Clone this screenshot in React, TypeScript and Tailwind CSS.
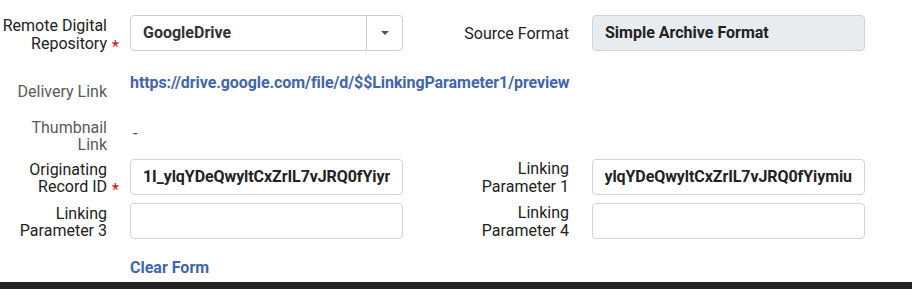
const RECORD_ID = "1I_ylqYDeQwyltCxZrIL7vJRQ0fYiymiu";

function Label({ children, required, muted }: { children: React.ReactNode; required?: boolean; muted?: boolean }) {
  return (
    <div className="relative w-[107px] shrink-0 pt-[2px] text-right leading-[17.6px]">
      <span className={muted ? "text-[#5a5a5a]" : "text-[#222]"}>{children}</span>
      {required && <span className="absolute right-[-12px] bottom-[-3px] text-[#e00]">*</span>}
    </div>
  );
}

function RightLabel({ children }: { children: React.ReactNode }) {
  return (
    <div className="flex h-[38px] w-[166px] shrink-0 items-center justify-end">
      <div className="w-[107px] text-right leading-[17.6px] text-[#222]">{children}</div>
    </div>
  );
}

function TextBox({ value, alignEnd }: { value?: string; alignEnd?: boolean }) {
  return (
    <div className="ml-[23px] flex h-[36px] w-[273px] shrink-0 items-center rounded border border-[#d4d4d4] bg-white px-3">
      <div className={"flex w-full overflow-hidden whitespace-nowrap font-bold tracking-[-0.08px] text-[#222] " + (alignEnd ? "justify-end" : "")}>
        {value}
      </div>
    </div>
  );
}

export default function App() {
  return (
    <div className="relative h-[289px] w-[912px] overflow-hidden bg-white text-[16px]" style={{ fontFamily: "Roboto, 'Liberation Sans', sans-serif" }}>
      <div className="flex flex-col pt-[15px]">
        {/* repository + source format */}
        <div className="flex h-[36px] items-start">
          <Label required>Remote Digital Repository</Label>
          <div className="ml-[23px] flex h-[36px] w-[273px] shrink-0 items-stretch rounded border border-[#cfcfcf] bg-white">
            <div className="flex flex-1 items-center px-3 font-bold text-[#333]">GoogleDrive</div>
            <div className="flex w-[36px] items-center justify-center border-l border-[#cfcfcf]">
              <span className="h-0 w-0 border-x-[4px] border-t-[4px] border-x-transparent border-t-[#555]" />
            </div>
          </div>
          <RightLabel>Source Format</RightLabel>
          <div className="ml-[23px] flex h-[36px] w-[273px] shrink-0 items-center rounded border border-[#cfd4da] bg-[#e9ecef] px-3 font-bold text-[#222]">
            Simple Archive Format
          </div>
        </div>

        {/* delivery link */}
        <div className="mt-[23px] flex items-start">
          <div className="pt-[7px]">
            <Label muted>Delivery Link</Label>
          </div>
          <a className="ml-[23px] font-bold leading-[18px] tracking-[-0.08px] text-[#3f66ae]">https://drive.google.com/file/d/$$LinkingParameter1/preview</a>
        </div>

        {/* thumbnail */}
        <div className="mt-[16px] flex h-[36px] items-start">
          <Label muted>Thumbnail Link</Label>
          <span className="ml-[26px] mt-[8px] leading-[18px] text-[#444]">-</span>
        </div>

        {/* ids */}
        <div className="mt-[6px] flex h-[36px] items-start">
          <Label required>Originating Record ID</Label>
          <TextBox value={RECORD_ID} />
          <RightLabel>Linking Parameter 1</RightLabel>
          <TextBox value={RECORD_ID} alignEnd />
        </div>

        <div className="mt-[8px] flex h-[36px] items-start">
          <Label>Linking Parameter 3</Label>
          <TextBox />
          <RightLabel>Linking Parameter 4</RightLabel>
          <TextBox />
        </div>

        <div className="mt-[20px] flex">
          <a className="ml-[130px] font-bold leading-[18px] text-[#3f66ae]">Clear Form</a>
        </div>
      </div>
      <div className="absolute bottom-0 left-0 h-[7px] w-full bg-[#222]" />
    </div>
  );
}
